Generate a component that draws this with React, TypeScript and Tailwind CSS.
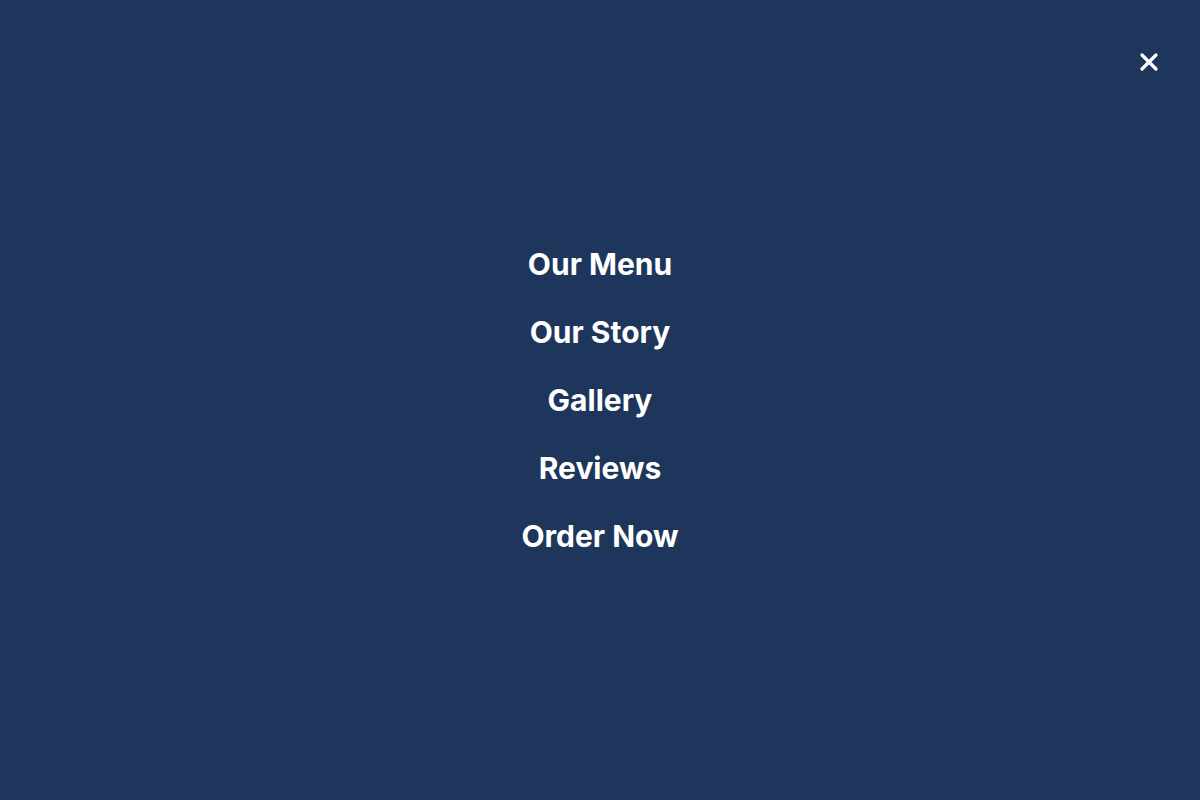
import { X } from "lucide-react";

const links = ["Our Menu", "Our Story", "Gallery", "Reviews", "Order Now"];

export default function App() {
  return (
    <div
      className="relative flex min-h-screen w-full items-center justify-center bg-[#1e365c] text-white"
      style={{ fontFamily: "Inter, 'Noto Sans', sans-serif" }}
    >
      <button
        type="button"
        aria-label="Close menu"
        className="absolute right-[37px] top-[48px] text-white"
      >
        <X size={28} strokeWidth={2.8} />
      </button>

      <nav className="flex flex-col items-center gap-8">
        {links.map((link) => (
          <a key={link} href="#" className="text-3xl font-bold text-white">
            {link}
          </a>
        ))}
      </nav>
    </div>
  );
}
